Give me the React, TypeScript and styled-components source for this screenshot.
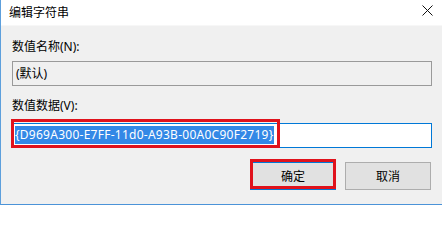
import React from "react";
import styled, { createGlobalStyle } from "styled-components";

const Global = createGlobalStyle`
  html, body { margin: 0; padding: 0; background: #ffffff; }
  body { font-family: "Noto Sans", "Noto Sans CJK SC", sans-serif; font-size: 12px; color: #000; }
`;

const Window = styled.div`
  width: 442px;
  height: 205px;
  box-sizing: border-box;
  border-left: 1px solid #5d9fdc;
  border-bottom: 1px solid #4b93d8;
  background: #f0f0f0;
  display: flex;
  flex-direction: column;
`;

const TitleBar = styled.div`
  height: 26px;
  flex: 0 0 26px;
  background: #ffffff;
  display: flex;
  align-items: flex-start;
  justify-content: space-between;
  padding: 0 9px 0 8px;
  box-sizing: border-box;
  border-bottom: 1px solid #f7f7f7;
`;

const Title = styled.span`
  font-family: "Noto Sans CJK SC", sans-serif;
  font-size: 12px;
  line-height: 16px;
  margin-top: 4px;
  color: #000;
`;

const CloseIcon = styled.svg`
  width: 11px;
  height: 11px;
  margin-top: 5px;
`;

const Body = styled.div`
  flex: 1;
  padding: 13px 10px 0 11px;
  display: flex;
  flex-direction: column;
`;

const Label = styled.div<{ $gap: number }>`
  font-family: "Noto Sans", "Noto Sans CJK SC", sans-serif;
  font-size: 12px;
  line-height: 16px;
  height: 16px;
  margin-bottom: ${(p) => p.$gap}px;
`;

const ReadField = styled.div`
  height: 25px;
  box-sizing: border-box;
  border: 1px solid #9a9a9a;
  background: #f0f0f0;
  padding: 0 3px;
  display: flex;
  align-items: center;
  font-size: 12px;
  line-height: 16px;
  margin-bottom: 12px;
`;

const EditWrap = styled.div`
  position: relative;
  margin-bottom: 14px;
`;

const EditField = styled.div`
  height: 25px;
  box-sizing: border-box;
  border: 1px solid #0078d7;
  background: #ffffff;
  padding: 0 2px;
  display: flex;
  align-items: center;
`;

const Selected = styled.span`
  background: #3388e6;
  color: #ffffff;
  font-family: "Noto Sans", sans-serif;
  font-size: 12px;
  line-height: 18px;
  height: 18px;
  margin-top: -2px;
  letter-spacing: 0.26px;
`;

const RedMark = styled.div<{ $top: number; $left: number; $width: number; $height: number }>`
  position: absolute;
  top: ${(p) => p.$top}px;
  left: ${(p) => p.$left}px;
  width: ${(p) => p.$width}px;
  height: ${(p) => p.$height}px;
  box-sizing: border-box;
  border: 3px solid #e0121c;
  pointer-events: none;
`;

const ButtonRow = styled.div`
  display: flex;
  justify-content: flex-end;
  gap: 9px;
  padding-right: 1px;
`;

const ButtonBox = styled.div`
  position: relative;
`;

const Button = styled.div<{ $default?: boolean }>`
  width: 86px;
  height: 28px;
  box-sizing: border-box;
  border: 1px solid ${(p) => (p.$default ? "#0078d7" : "#adadad")};
  background: #e1e1e1;
  display: flex;
  align-items: center;
  justify-content: center;
  font-family: "Noto Sans CJK SC", sans-serif;
  font-size: 12px;
  line-height: 16px;
`;

export default function App() {
  return (
    <>
      <Global />
      <Window>
        <TitleBar>
          <Title>编辑字符串</Title>
          <CloseIcon viewBox="0 0 11 11">
            <path d="M0.5 0.5 L10.5 10.5 M10.5 0.5 L0.5 10.5" stroke="#111" strokeWidth="1" fill="none" />
          </CloseIcon>
        </TitleBar>
        <Body>
          <Label $gap={6}>数值名称(N):</Label>
          <ReadField>(默认)</ReadField>
          <Label $gap={9}>数值数据(V):</Label>
          <EditWrap>
            <EditField>
              <Selected>{"{D969A300-E7FF-11d0-A93B-00A0C90F2719}"}</Selected>
            </EditField>
            <RedMark $top={-4} $left={-1} $width={269} $height={29} />
          </EditWrap>
          <ButtonRow>
            <ButtonBox>
              <Button $default>确定</Button>
              <RedMark $top={-3} $left={0} $width={86} $height={30} />
            </ButtonBox>
            <ButtonBox>
              <Button>取消</Button>
            </ButtonBox>
          </ButtonRow>
        </Body>
      </Window>
    </>
  );
}
